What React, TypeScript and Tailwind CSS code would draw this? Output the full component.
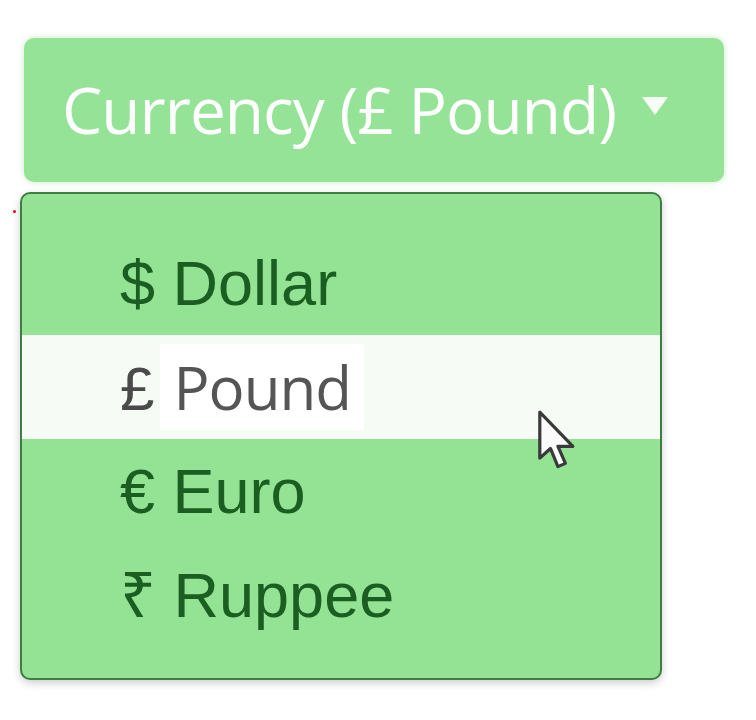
import React from "react";

const ITEMS = [
  { sym: "$", label: "Dollar" },
  { sym: "£", label: "Pound", active: true },
  { sym: "€", label: "Euro" },
  { sym: "₹", label: "Ruppee" },
];

function Cursor() {
  return (
    <svg width="48" height="64" viewBox="0 0 44 60" className="absolute left-[535px] top-[409px]">
      <path
        d="M4 3 L4 46 L14 37 L21 54 L28 51 L21 35 L35 35 Z"
        fill="#fbfbfb"
        stroke="#3a3a3a"
        strokeWidth="3"
        strokeLinejoin="round"
      />
    </svg>
  );
}

export default function App() {
  return (
    <div className="relative w-[756px] h-[720px] bg-white overflow-hidden pl-[20px] pt-[38px]">
      <span className="absolute left-[13px] top-[210px] w-[3px] h-[3px] rounded-full bg-red-600" />
      <button className="ml-[4px] w-[700px] h-[144px] rounded-[10px] bg-[#95e396] flex items-center pl-[38px] shadow-[0_0_6px_rgba(120,200,120,0.4)]">
        <span
          className="text-white text-[64px] leading-none tracking-[-1px]"
          style={{ fontFamily: '"Open Sans", sans-serif' }}
        >
          Currency (£ Pound)
        </span>
        <svg width="26" height="18" viewBox="0 0 26 18" className="ml-[26px] mb-[8px]">
          <path d="M0 0 L26 0 L13 18 Z" fill="#ffffff" opacity="0.9" />
        </svg>
      </button>

      <div className="mt-[10px] w-[642px] h-[488px] rounded-[10px] border-2 border-[#3f7d45] bg-[#94e394] pt-[37px] shadow-[0_3px_8px_rgba(0,0,0,0.2)] flex flex-col">
        {ITEMS.map((it) => (
          <div
            key={it.label}
            className={`h-[104px] flex items-center pl-[98px] ${it.active ? "bg-[#f6fbf6]" : ""}`}
            style={{ fontFamily: '"Liberation Sans", Arial, sans-serif' }}
          >
            {it.active ? (
              <>
                <span className="text-[62px] leading-none text-[#4a4a4a] mt-[4px]">£</span>
                <span
                  className="ml-[6px] bg-white h-[86px] px-[13px] flex items-center text-[60px] leading-none tracking-[-1px] text-[#555555]"
                  style={{ fontFamily: '"Open Sans", sans-serif' }}
                >
                  Pound
                </span>
              </>
            ) : (
              <span className="text-[63px] leading-none text-[#1b5e22] blur-[0.6px]">
                {it.sym} {it.label}
              </span>
            )}
          </div>
        ))}
      </div>
      <Cursor />
    </div>
  );
}
